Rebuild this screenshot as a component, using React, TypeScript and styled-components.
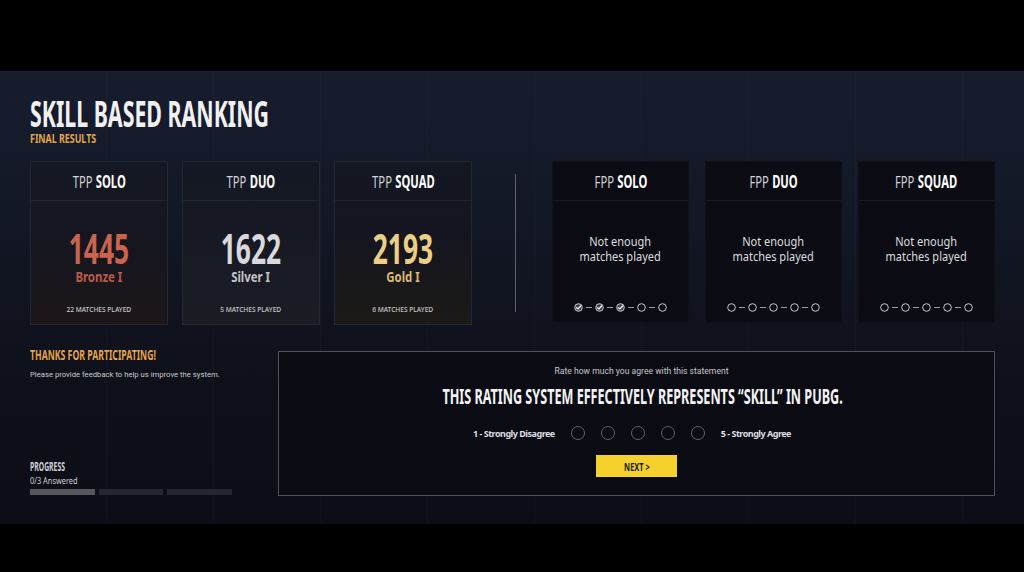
import React from "react";
import styled, { createGlobalStyle, css } from "styled-components";

const Global = createGlobalStyle`
  html, body { margin: 0; padding: 0; background: #000; }
  body { font-family: "Roboto", "Liberation Sans", sans-serif; }
  * { box-sizing: border-box; }
`;

const display = css`
  font-family: "Noto Sans", "DejaVu Sans", sans-serif;
  font-weight: 700;
  line-height: 1;
  white-space: nowrap;
`;

const squeeze = (x: number, origin: "left" | "center") => css`
  transform: scaleX(${x});
  transform-origin: ${origin} center;
`;

const Screen = styled.div`
  width: 1024px;
  height: 572px;
  background: #000;
  display: flex;
  flex-direction: column;
  overflow: hidden;
`;

const Letterbox = styled.div<{ $h: number }>`
  height: ${(p) => p.$h}px;
  flex: none;
  background: #000;
`;

const Panel = styled.main`
  height: 453px;
  flex: none;
  padding: 0 29px 0 30px;
  border-top: 1px solid #1c2232;
  background:
    repeating-linear-gradient(90deg, transparent 0 106px, rgba(255, 255, 255, 0.018) 106px 107px),
    linear-gradient(180deg, #171d2c 0%, #131827 30%, #0e1019 70%, #0c0d16 100%);
  display: flex;
  flex-direction: column;
`;

const Title = styled.h1`
  ${display};
  ${squeeze(0.593, "left")};
  margin: 24px 0 0;
  font-size: 36px;
  color: #f1f1f3;
`;

const Subtitle = styled.div`
  ${display};
  ${squeeze(0.74, "left")};
  margin-top: 1px;
  font-size: 12px;
  color: #e4a54a;
`;

const CardsRow = styled.section`
  margin-top: 16px;
  display: flex;
  align-items: flex-start;
`;

const CardGroup = styled.div<{ $gap: number }>`
  display: flex;
  gap: ${(p) => p.$gap}px;
`;

const Divider = styled.div`
  width: 1px;
  height: 138px;
  margin: 13px 36px 0 43px;
  background: #5e616b;
`;

type Tier = "bronze" | "silver" | "gold" | "none";

const tierBg: Record<Tier, string> = {
  bronze: "linear-gradient(180deg, #141824 0%, #15161f 45%, #1c1619 100%)",
  silver: "linear-gradient(180deg, #141824 0%, #161923 45%, #1b1d25 100%)",
  gold: "linear-gradient(180deg, #131722 0%, #141520 45%, #1c1a16 100%)",
  none: "#0b0c13",
};

const Card = styled.article<{ $tier: Tier; $w: number; $h: number }>`
  width: ${(p) => p.$w}px;
  height: ${(p) => p.$h}px;
  background: ${(p) => tierBg[p.$tier]};
  border: 1px solid ${(p) => (p.$tier === "none" ? "#0f1019" : "#232735")};
  display: flex;
  flex-direction: column;
`;

const CardHead = styled.header`
  height: 39px;
  flex: none;
  border-bottom: 1px solid rgba(255, 255, 255, 0.06);
  display: flex;
  align-items: center;
  justify-content: center;
`;

const HeadText = styled.h4`
  ${display};
  ${squeeze(0.66, "center")};
  margin: 0;
  font-size: 17px;
  color: #ffffff;
`;

const Light = styled.span`
  font-weight: 400;
  color: #d2d3d7;
  margin-right: 5px;
`;

const CardBody = styled.div`
  flex: 1;
  display: flex;
  flex-direction: column;
  align-items: center;
`;

const tierColor: Record<Tier, [string, string]> = {
  bronze: ["#c9654f", "#b95c49"],
  silver: ["#d9d9dd", "#c4c4c8"],
  gold: ["#ebcf84", "#dbbb72"],
  none: ["#fff", "#fff"],
};

const Score = styled.div<{ $tier: Tier }>`
  ${display};
  ${squeeze(0.645, "center")};
  margin-top: 27px;
  font-size: 41px;
  color: ${(p) => tierColor[p.$tier][0]};
`;

const Rank = styled.div<{ $tier: Tier }>`
  ${display};
  ${squeeze(0.76, "center")};
  margin-top: 0;
  font-size: 15px;
  color: ${(p) => tierColor[p.$tier][1]};
`;

const Matches = styled.div`
  ${display};
  ${squeeze(0.88, "center")};
  margin-top: 22px;
  font-size: 7.5px;
  font-weight: 500;
  color: #c9c9cc;
  text-transform: uppercase;
`;

const NotEnough = styled.div`
  ${squeeze(0.88, "center")};
  font-family: "Noto Sans", "Roboto", sans-serif;
  margin-top: 33px;
  font-size: 12.5px;
  line-height: 15px;
  color: #dcdcdf;
  text-align: center;
  white-space: nowrap;
`;

const Dots = styled.div`
  margin-top: 39px;
  display: flex;
  align-items: center;
  gap: 3px;
`;

const Connector = styled.span`
  width: 6px;
  height: 1px;
  background: #9a9ca3;
`;

const BottomRow = styled.section`
  margin-top: 24px;
  display: flex;
  gap: 46px;
`;

const Side = styled.aside`
  width: 202px;
  height: 147px;
  display: flex;
  flex-direction: column;
`;

const Accent = styled.h2`
  ${display};
  ${squeeze(0.58, "left")};
  margin: -2px 0 0;
  font-size: 15px;
  color: #e4a54a;
`;

const Small = styled.p`
  margin: 8px 0 0;
  font-size: 7.7px;
  line-height: 10px;
  color: #c9cacf;
  white-space: nowrap;
`;

const Progress = styled.div`
  margin-top: auto;
  display: flex;
  flex-direction: column;
`;

const ProgressLabel = styled.div`
  ${display};
  ${squeeze(0.57, "left")};
  font-size: 12px;
  color: #cfd0d5;
`;

const ProgressSub = styled.div`
  ${squeeze(0.82, "left")};
  font-family: "Noto Sans", "Roboto", sans-serif;
  margin-top: 3px;
  font-size: 9px;
  line-height: 10px;
  color: #cfd0d5;
`;

const Bars = styled.div`
  margin-top: 3px;
  margin-bottom: 1px;
  display: grid;
  grid-template-columns: repeat(3, 1fr);
  gap: 4px;
`;

const Bar = styled.div<{ $on: boolean }>`
  height: 6px;
  background: ${(p) => (p.$on ? "#56585f" : "#24262f")};
`;

const Survey = styled.section`
  margin-top: 2px;
  width: 717px;
  height: 145px;
  border: 1px solid #4f525b;
  background: #0b0c13;
  display: flex;
  flex-direction: column;
  align-items: center;
`;

const Prompt = styled.div`
  margin: 14px 0 0 10px;
  font-size: 8.6px;
  line-height: 10px;
  color: #c6c7cc;
`;

const Question = styled.h3`
  ${display};
  ${squeeze(0.6, "center")};
  margin: 10px 0 0 12px;
  font-size: 21px;
  color: #f3f3f5;
`;

const RatingRow = styled.div`
  margin: 19px 9px 0 0;
  display: flex;
  align-items: center;
  gap: 16px;
`;

const ScaleLabel = styled.span`
  font-family: "Noto Sans", "Roboto", sans-serif;
  font-size: 9px;
  font-weight: 700;
  letter-spacing: -0.5px;
  color: #dedfe2;
`;

const Radio = styled.button`
  width: 14px;
  height: 14px;
  padding: 0;
  border-radius: 50%;
  border: 1.5px solid #5e6068;
  background: transparent;
`;

const NextButton = styled.button`
  margin-top: 15px;
  width: 81px;
  height: 22px;
  padding: 0;
  border: none;
  background: #f4d12c;
  display: flex;
  align-items: center;
  justify-content: center;
`;

const NextText = styled.span`
  ${display};
  ${squeeze(0.68, "center")};
  font-size: 11px;
  color: #1b1a12;
`;

const Dot = ({ done }: { done: boolean }) => (
  <svg width="9" height="9" viewBox="0 0 9 9">
    <circle
      cx="4.5"
      cy="4.5"
      r="3.8"
      fill={done ? "rgba(255,255,255,0.22)" : "none"}
      stroke="#c9cace"
      strokeWidth="1"
    />
    {done && (
      <path d="M2.6 4.7 L4 6 L6.6 3" fill="none" stroke="#ffffff" strokeWidth="1.2" strokeLinecap="round" />
    )}
  </svg>
);

const tpp: { mode: string; score: number; rank: string; tier: Tier; matches: number }[] = [
  { mode: "SOLO", score: 1445, rank: "Bronze I", tier: "bronze", matches: 22 },
  { mode: "DUO", score: 1622, rank: "Silver I", tier: "silver", matches: 5 },
  { mode: "SQUAD", score: 2193, rank: "Gold I", tier: "gold", matches: 6 },
];

const fpp: { mode: string; done: number }[] = [
  { mode: "SOLO", done: 3 },
  { mode: "DUO", done: 0 },
  { mode: "SQUAD", done: 0 },
];

export default function App() {
  return (
    <Screen>
      <Global />
      <Letterbox $h={71} />
      <Panel>
        <Title>SKILL BASED RANKING</Title>
        <Subtitle>FINAL RESULTS</Subtitle>
        <CardsRow>
          <CardGroup $gap={14}>
            {tpp.map((c) => (
              <Card key={c.mode} $tier={c.tier} $w={138} $h={164}>
                <CardHead>
                  <HeadText>
                    <Light>TPP</Light>
                    {c.mode}
                  </HeadText>
                </CardHead>
                <CardBody>
                  <Score $tier={c.tier}>{c.score}</Score>
                  <Rank $tier={c.tier}>{c.rank}</Rank>
                  <Matches>{c.matches} matches played</Matches>
                </CardBody>
              </Card>
            ))}
          </CardGroup>
          <Divider />
          <CardGroup $gap={16}>
            {fpp.map((c) => (
              <Card key={c.mode} $tier="none" $w={137} $h={162}>
                <CardHead>
                  <HeadText>
                    <Light>FPP</Light>
                    {c.mode}
                  </HeadText>
                </CardHead>
                <CardBody>
                  <NotEnough>
                    Not enough
                    <br />
                    matches played
                  </NotEnough>
                  <Dots>
                    {[0, 1, 2, 3, 4].map((i) => (
                      <React.Fragment key={i}>
                        {i > 0 && <Connector />}
                        <Dot done={i < c.done} />
                      </React.Fragment>
                    ))}
                  </Dots>
                </CardBody>
              </Card>
            ))}
          </CardGroup>
        </CardsRow>
        <BottomRow>
          <Side>
            <Accent>THANKS FOR PARTICIPATING!</Accent>
            <Small>Please provide feedback to help us improve the system.</Small>
            <Progress>
              <ProgressLabel>PROGRESS</ProgressLabel>
              <ProgressSub>0/3 Answered</ProgressSub>
              <Bars>
                <Bar $on />
                <Bar $on={false} />
                <Bar $on={false} />
              </Bars>
            </Progress>
          </Side>
          <Survey>
            <Prompt>Rate how much you agree with this statement</Prompt>
            <Question>THIS RATING SYSTEM EFFECTIVELY REPRESENTS “SKILL” IN PUBG.</Question>
            <RatingRow>
              <ScaleLabel>1 - Strongly Disagree</ScaleLabel>
              {[1, 2, 3, 4, 5].map((n) => (
                <Radio key={n} aria-label={`Rate ${n}`} />
              ))}
              <ScaleLabel>5 - Strongly Agree</ScaleLabel>
            </RatingRow>
            <NextButton>
              <NextText>NEXT &gt;</NextText>
            </NextButton>
          </Survey>
        </BottomRow>
      </Panel>
      <Letterbox $h={48} />
    </Screen>
  );
}
